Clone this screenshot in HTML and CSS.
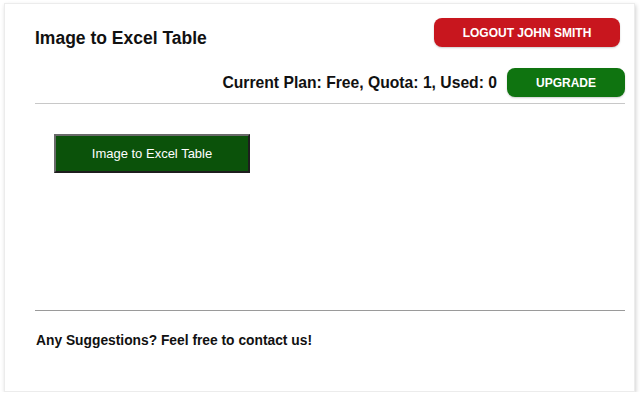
FILE: index.html
```html
<!DOCTYPE html>
<html>
<head>
<meta charset="utf-8">
<link rel="stylesheet" href="styles.css">
</head>
<body>
<div class="card">
  <div class="row-top">
    <h1 class="title">Image to Excel Table</h1>
    <button class="btn btn-red">LOGOUT JOHN SMITH</button>
  </div>
  <div class="row-plan">
    <span class="plan">Current Plan: Free, Quota: 1, Used: 0</span>
    <button class="btn btn-green">UPGRADE</button>
  </div>
  <div class="rule rule-light"></div>
  <div class="main">
    <button class="tool-btn">Image to Excel Table</button>
  </div>
  <div class="rule rule-dark"></div>
  <p class="footer">Any Suggestions? Feel free to contact us!</p>
</div>
</body>
</html>
```
FILE: styles.css
```css
html, body {
  margin: 0;
  padding: 0;
  background: #ffffff;
  font-family: "Liberation Sans", Arial, sans-serif;
  color: #111;
}
.card {
  box-sizing: border-box;
  margin: 3px 5px 0 4px;
  height: 389px;
  padding: 14px 9px 0 30px;
  border: 1px solid #ececec;
  box-shadow: 1px 2px 4px rgba(0, 0, 0, 0.18);
  background: #fff;
}
.row-top {
  display: flex;
  justify-content: space-between;
  align-items: flex-start;
  padding-right: 5px;
}
.title {
  margin: 10px 0 0 0;
  font-size: 17.5px;
  line-height: 20px;
  font-weight: bold;
}
.btn {
  border: none;
  border-radius: 8px;
  color: #fff;
  font-family: "Liberation Sans", Arial, sans-serif;
  font-weight: bold;
  font-size: 12px;
  height: 29px;
  padding: 0;
  box-shadow: 0 1px 2px rgba(0, 0, 0, 0.2);
}
.btn-red {
  background: #c8161e;
  width: 186px;
}
.btn-green {
  background: #0f7410;
  width: 118px;
}
.row-plan {
  display: flex;
  justify-content: flex-end;
  align-items: center;
  gap: 10px;
  margin-top: 20px;
}
.plan {
  font-size: 15.7px;
  font-weight: bold;
}
.rule {
  height: 1px;
}
.rule-light {
  margin-top: 6px;
  background: #c8c8c8;
}
.rule-dark {
  background: #9a9a9a;
}
.main {
  height: 206px;
  padding: 30px 0 0 19px;
  box-sizing: border-box;
}
.tool-btn {
  width: 196px;
  height: 39px;
  background: #0b520a;
  color: #fff;
  font-family: "Liberation Sans", Arial, sans-serif;
  font-size: 13px;
  border-style: solid;
  border-width: 2px;
  border-color: #6a6a6a #1e1e1e #1e1e1e #6a6a6a;
  padding: 0;
}
.footer {
  margin: 21px 0 0 1px;
  font-size: 13.8px;
  line-height: 17px;
  font-weight: bold;
}
```
